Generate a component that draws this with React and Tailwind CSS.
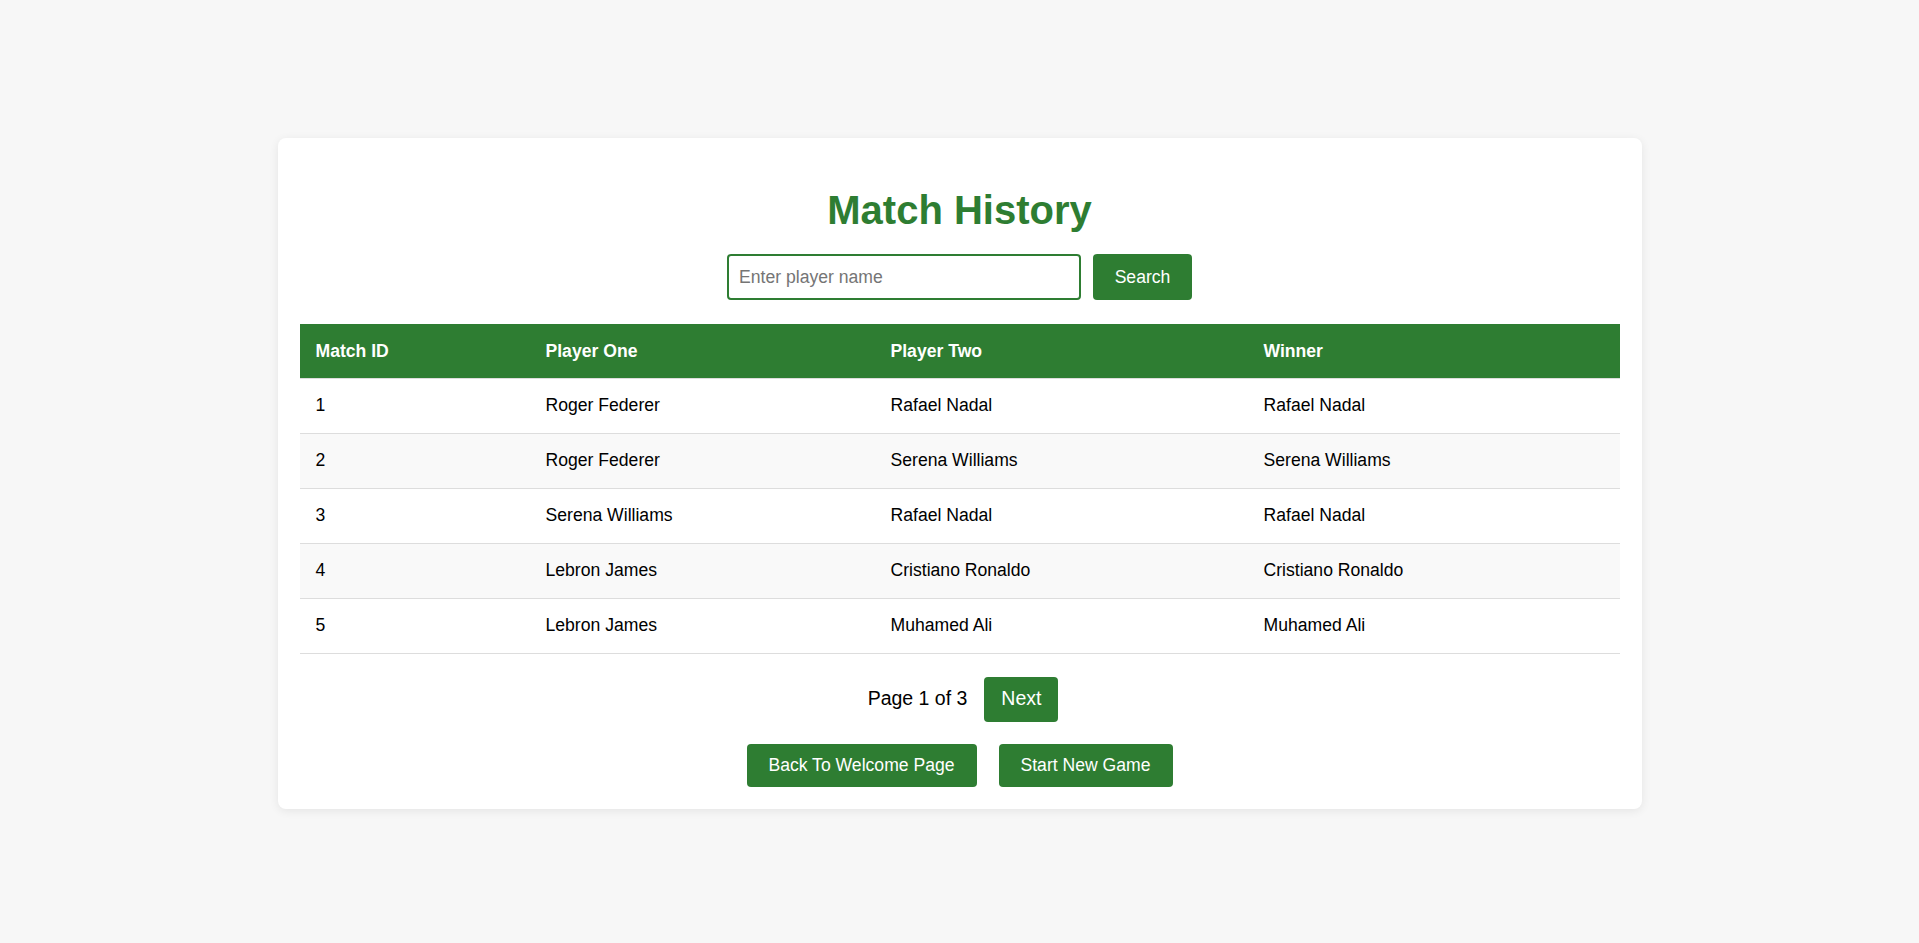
import React, { useState } from 'react';

const matches = [
    { id: 1, playerOne: 'Roger Federer', playerTwo: 'Rafael Nadal', winner: 'Rafael Nadal' },
    { id: 2, playerOne: 'Roger Federer', playerTwo: 'Serena Williams', winner: 'Serena Williams' },
    { id: 3, playerOne: 'Serena Williams', playerTwo: 'Rafael Nadal', winner: 'Rafael Nadal' },
    { id: 4, playerOne: 'Lebron James', playerTwo: 'Cristiano Ronaldo', winner: 'Cristiano Ronaldo' },
    { id: 5, playerOne: 'Lebron James', playerTwo: 'Muhamed Ali', winner: 'Muhamed Ali' },
];

const App = () => {
    const [query, setQuery] = useState('');

    return (
        <div
            className="min-h-[943px] bg-[#f7f7f7] pt-[138px]"
            style={{ fontFamily: '"Liberation Sans", Arial, sans-serif' }}
        >
            <div className="mx-auto w-[1364px] bg-white rounded-lg shadow-[0_2px_10px_rgba(0,0,0,0.08)] px-[22px] pb-[22px] pt-[49px]">
                {/* Title */}
                <h1 className="text-center text-[40px] leading-[46px] font-bold text-[#2e7d32]">
                    Match History
                </h1>

                {/* Search */}
                <div className="mt-[21px] flex justify-center gap-[12px]">
                    <input
                        type="text"
                        value={query}
                        onChange={(e) => setQuery(e.target.value)}
                        placeholder="Enter player name"
                        className="w-[354px] h-[46px] border-2 border-[#2e7d32] rounded-[4px] px-[10px] text-[17.6px] text-black placeholder:text-[#757575] outline-none"
                    />
                    <button className="w-[99px] h-[46px] bg-[#2e7d32] text-white text-[17.6px] rounded-[4px]">
                        Search
                    </button>
                </div>

                {/* Table */}
                <table className="mt-[24px] w-full border-collapse table-fixed text-[17.6px]">
                    <colgroup>
                        <col className="w-[230px]" />
                        <col className="w-[345px]" />
                        <col className="w-[373px]" />
                        <col className="w-[372px]" />
                    </colgroup>
                    <thead>
                        <tr className="bg-[#2e7d32] text-white border-b border-[#ddd]">
                            <th className="h-[54px] px-4 text-left font-bold">Match ID</th>
                            <th className="h-[54px] px-4 text-left font-bold">Player One</th>
                            <th className="h-[54px] px-4 text-left font-bold">Player Two</th>
                            <th className="h-[54px] px-4 text-left font-bold">Winner</th>
                        </tr>
                    </thead>
                    <tbody>
                        {matches.map((match, i) => (
                            <tr
                                key={match.id}
                                className={`border-b border-[#ddd] text-black ${i % 2 === 1 ? 'bg-[#f9f9f9]' : 'bg-white'}`}
                            >
                                <td className="h-[55px] px-4">{match.id}</td>
                                <td className="h-[55px] px-4">{match.playerOne}</td>
                                <td className="h-[55px] px-4">{match.playerTwo}</td>
                                <td className="h-[55px] px-4">{match.winner}</td>
                            </tr>
                        ))}
                    </tbody>
                </table>

                {/* Pagination */}
                <div className="mt-[23px] flex justify-center items-center gap-[17px] pl-[7px]">
                    <span className="text-[19.5px] text-black">Page 1 of 3</span>
                    <button className="w-[74px] h-[45px] bg-[#2e7d32] text-white text-[19.5px] rounded-[4px]">
                        Next
                    </button>
                </div>

                {/* Navigation */}
                <div className="mt-[22px] flex justify-center gap-[22px]">
                    <button className="w-[230px] h-[43px] bg-[#2e7d32] text-white text-[17.6px] rounded-[4px]">
                        Back To Welcome Page
                    </button>
                    <button className="w-[174px] h-[43px] bg-[#2e7d32] text-white text-[17.6px] rounded-[4px]">
                        Start New Game
                    </button>
                </div>
            </div>
        </div>
    );
};

export default App;
